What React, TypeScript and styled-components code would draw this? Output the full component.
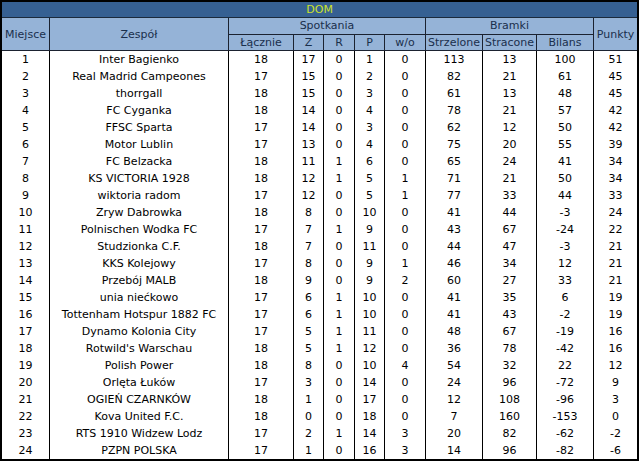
import styled, { createGlobalStyle } from 'styled-components'

const GlobalStyle = createGlobalStyle`
  html, body {
    margin: 0;
    padding: 0;
    background: #ffffff;
  }
`

const COLS = [48, 179, 65, 30, 31, 30, 41, 57, 54, 57, 43]

type Row = [number, string, number, number, number, number, number, number, number, number, number]

const ROWS: Row[] = [
  [1, 'Inter Bagienko', 18, 17, 0, 1, 0, 113, 13, 100, 51],
  [2, 'Real Madrid Campeones', 17, 15, 0, 2, 0, 82, 21, 61, 45],
  [3, 'thorrgall', 18, 15, 0, 3, 0, 61, 13, 48, 45],
  [4, 'FC Cyganka', 18, 14, 0, 4, 0, 78, 21, 57, 42],
  [5, 'FFSC Sparta', 17, 14, 0, 3, 0, 62, 12, 50, 42],
  [6, 'Motor Lublin', 17, 13, 0, 4, 0, 75, 20, 55, 39],
  [7, 'FC Belzacka', 18, 11, 1, 6, 0, 65, 24, 41, 34],
  [8, 'KS VICTORIA 1928', 18, 12, 1, 5, 1, 71, 21, 50, 34],
  [9, 'wiktoria radom', 17, 12, 0, 5, 1, 77, 33, 44, 33],
  [10, 'Zryw Dabrowka', 18, 8, 0, 10, 0, 41, 44, -3, 24],
  [11, 'Polnischen Wodka FC', 17, 7, 1, 9, 0, 43, 67, -24, 22],
  [12, 'Studzionka C.F.', 18, 7, 0, 11, 0, 44, 47, -3, 21],
  [13, 'KKS Kolejowy', 17, 8, 0, 9, 1, 46, 34, 12, 21],
  [14, 'Przebój MALB', 18, 9, 0, 9, 2, 60, 27, 33, 21],
  [15, 'unia niećkowo', 17, 6, 1, 10, 0, 41, 35, 6, 19],
  [16, 'Tottenham Hotspur 1882 FC', 17, 6, 1, 10, 0, 41, 43, -2, 19],
  [17, 'Dynamo Kolonia City', 17, 5, 1, 11, 0, 48, 67, -19, 16],
  [18, "Rotwild's Warschau", 18, 5, 1, 12, 0, 36, 78, -42, 16],
  [19, 'Polish Power', 18, 8, 0, 10, 4, 54, 32, 22, 12],
  [20, 'Orlęta Łuków', 17, 3, 0, 14, 0, 24, 96, -72, 9],
  [21, 'OGIEŃ CZARNKÓW', 18, 1, 0, 17, 0, 12, 108, -96, 3],
  [22, 'Kova United F.C.', 18, 0, 0, 18, 0, 7, 160, -153, 0],
  [23, 'RTS 1910 Widzew Lodz', 17, 2, 1, 14, 3, 20, 82, -62, -2],
  [24, 'PZPN POLSKA', 17, 1, 0, 16, 3, 14, 96, -82, -6],
]

const Table = styled.table`
  width: 639px;
  table-layout: fixed;
  border-collapse: separate;
  border-spacing: 0;
  border: 2px solid #000000;
  font-family: 'DejaVu Sans', Verdana, sans-serif;
  font-size: 11px;
  color: #000000;
`

const TitleCell = styled.th`
  height: 15px;
  padding: 0;
  background: #366092;
  color: #cde22a;
  font-weight: normal;
  text-align: center;
  line-height: 15px;
  border-bottom: 1px solid #1b2a3c;
`

const HeadCell = styled.th<{ $last?: boolean; $h?: number }>`
  height: ${(p) => p.$h ?? 16}px;
  padding: 0;
  background: #95b3d7;
  color: #1a2f4c;
  font-weight: normal;
  text-align: center;
  white-space: nowrap;
  overflow: hidden;
  line-height: ${(p) => p.$h ?? 16}px;
  border-right: ${(p) => (p.$last ? 'none' : '1px solid #1b2230')};
  border-bottom: 1px solid #1b2230;
`

const SpanHeadCell = styled(HeadCell)`
  line-height: normal;
`

const Cell = styled.td<{ $last?: boolean }>`
  height: 17px;
  padding: 0;
  text-align: center;
  white-space: nowrap;
  overflow: hidden;
  line-height: 17px;
  border-right: ${(p) => (p.$last ? 'none' : '1px solid #000000')};
`

export default function App() {
  return (
    <>
      <GlobalStyle />
      <Table>
        <colgroup>
          {COLS.map((w, i) => (
            <col key={i} style={{ width: w }} />
          ))}
        </colgroup>
        <thead>
          <tr>
            <TitleCell colSpan={11}>DOM</TitleCell>
          </tr>
          <tr>
            <SpanHeadCell rowSpan={2}>Miejsce</SpanHeadCell>
            <SpanHeadCell rowSpan={2}>Zespół</SpanHeadCell>
            <HeadCell colSpan={5} $h={16}>Spotkania</HeadCell>
            <HeadCell colSpan={3} $h={16}>Bramki</HeadCell>
            <SpanHeadCell rowSpan={2} $last>Punkty</SpanHeadCell>
          </tr>
          <tr>
            <HeadCell $h={15}>Łącznie</HeadCell>
            <HeadCell $h={15}>Z</HeadCell>
            <HeadCell $h={15}>R</HeadCell>
            <HeadCell $h={15}>P</HeadCell>
            <HeadCell $h={15}>w/o</HeadCell>
            <HeadCell $h={15}>Strzelone</HeadCell>
            <HeadCell $h={15}>Stracone</HeadCell>
            <HeadCell $h={15}>Bilans</HeadCell>
          </tr>
        </thead>
        <tbody>
          {ROWS.map((r) => (
            <tr key={r[0]}>
              {r.map((v, i) => (
                <Cell key={i} $last={i === r.length - 1}>
                  {v}
                </Cell>
              ))}
            </tr>
          ))}
        </tbody>
      </Table>
    </>
  )
}
